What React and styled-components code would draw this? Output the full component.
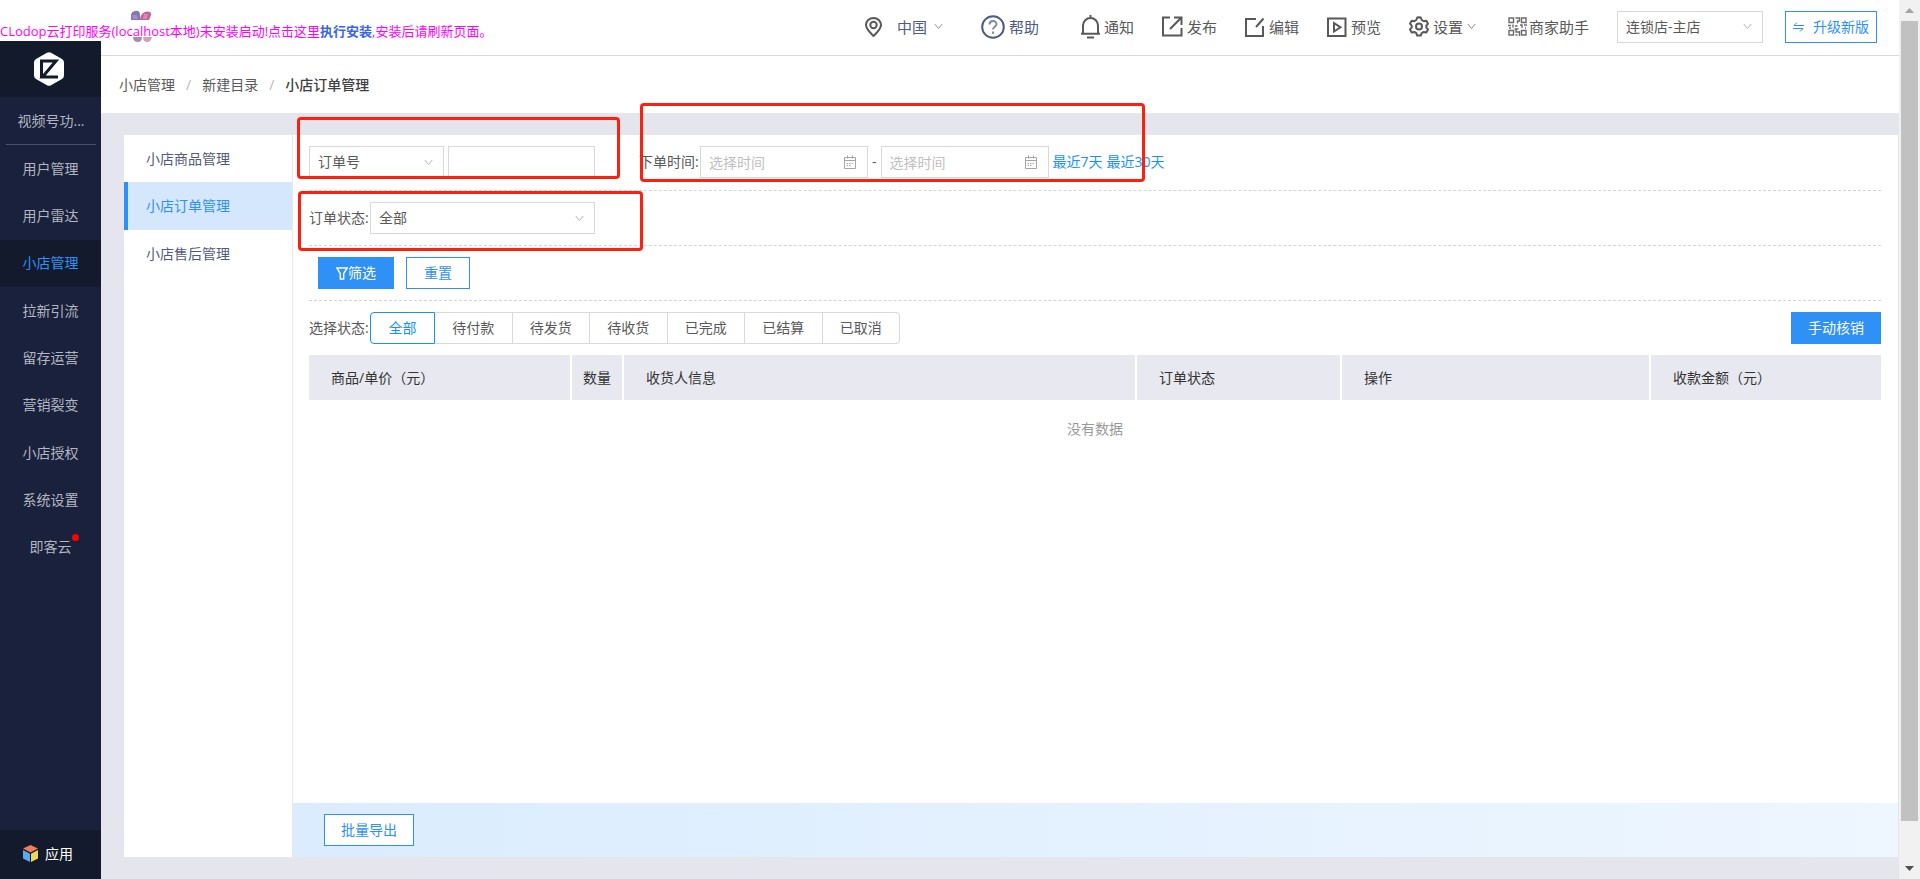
import React, { useState } from "react";
import styled, { createGlobalStyle } from "styled-components";

const GlobalStyle = createGlobalStyle`
  * {
    box-sizing: border-box;
  }
  body {
    margin: 0;
    overflow: hidden;
    background: #fff;
  }
  body, button, input, select {
    font-family: "Open Sans", "Noto Sans CJK SC", sans-serif;
    font-size: 14px;
    line-height: 20px;
    color: #595959;
  }
  a {
    text-decoration: none;
  }
`;

const Page = styled.div`
  position: relative;
  display: flex;
  height: 100vh;
`;

const Notice = styled.div`
  position: absolute;
  top: 21px;
  left: 0;
  z-index: 5;
  font-size: 13px;
  color: #ff00ff;
  white-space: nowrap;

  a {
    color: #3c66e0;
    font-weight: 700;
  }
`;

const Sidebar = styled.aside`
  display: flex;
  flex-direction: column;
  width: 101px;
  flex-shrink: 0;
  margin-top: 41px;
  background: #1a213c;
`;

const Brand = styled.div`
  display: flex;
  align-items: center;
  justify-content: center;
  height: 56px;
  padding-right: 3px;
  background: #131a2b;
`;

const ShopName = styled.div`
  margin: 0 5px 0 6px;
  height: 48px;
  line-height: 48px;
  text-align: center;
  color: #b3b6c0;
  border-bottom: 1px solid #4b5069;
`;

const MainNav = styled.nav`
  display: grid;
  grid-auto-rows: 1fr;
  height: 426px;
`;

const MainNavLink = styled.a`
  display: flex;
  align-items: center;
  justify-content: center;
  color: ${(props) => (props.$active ? "#2f91f5" : "#b3b6c0")};
  background: ${(props) => (props.$active ? "#131a2b" : "transparent")};
`;

const DotLabel = styled.span`
  position: relative;

  &::after {
    content: "";
    position: absolute;
    top: -3px;
    right: -7px;
    width: 7px;
    height: 7px;
    border-radius: 50%;
    background: #ff0000;
  }
`;

const Apps = styled.a`
  display: flex;
  align-items: center;
  gap: 6px;
  height: 49px;
  margin-top: auto;
  padding: 0 0 2px 22px;
  background: #131a2b;
  color: #fff;
`;

const Main = styled.div`
  display: flex;
  flex-direction: column;
  flex: 1;
  min-width: 0;
  background: #e5e5ee;
`;

const Header = styled.header`
  display: flex;
  align-items: center;
  height: 56px;
  padding: 0 22px 2px 29px;
  background: #fff;
  border-bottom: 1px solid #d9d9d9;
`;

const Tools = styled.div`
  display: flex;
  align-items: center;
  gap: 28px;
  margin-left: auto;
`;

const Tool = styled.a`
  display: flex;
  align-items: center;
  gap: ${(props) => props.$gap || 4}px;
  margin-right: ${(props) => props.$after || 0}px;
  font-size: 15px;
  white-space: nowrap;
  color: ${(props) => (props.$blue ? "#515a80" : "#595959")};
`;

const SelectWrap = styled.label`
  display: grid;
  align-items: center;
  width: ${(props) => props.$width}px;

  select,
  svg {
    grid-area: 1 / 1;
  }
  svg {
    justify-self: end;
    margin-right: 11px;
    pointer-events: none;
  }
`;

const SelectBox = styled.select`
  appearance: none;
  width: 100%;
  height: 32px;
  padding: 0 24px 0 8px;
  border: 1px solid #d9d9d9;
  border-radius: 0;
  background: #fff;
  outline: none;
`;

const Button = styled.button`
  display: flex;
  align-items: center;
  justify-content: center;
  gap: ${(props) => props.$gap || 0}px;
  height: 32px;
  padding: 0 ${(props) => props.$pad || 16}px;
  border: 1px solid #2f91f5;
  background: ${(props) => (props.$primary ? "#2f91f5" : "#fff")};
  color: ${(props) => (props.$primary ? "#fff" : "#2f91f5")};
  white-space: nowrap;
`;

const UpgradeSlot = styled.div`
  margin-left: -6px;
`;

const Breadcrumb = styled.nav`
  display: flex;
  align-items: center;
  gap: 11px;
  height: 57px;
  padding-left: 18px;
  background: #fff;

  a {
    color: #595959;
  }
  span {
    color: #b8b8b8;
  }
  b {
    font-weight: 500;
    color: #404040;
  }
`;

const Panel = styled.div`
  display: flex;
  flex: 1;
  margin: 22px 1px 22px 23px;
  background: #fff;
`;

const SubNav = styled.nav`
  width: 169px;
  border-right: 1px solid #e8e8e8;
`;

const SubNavLink = styled.a`
  display: block;
  height: ${(props) => (props.$active ? 48 : 47)}px;
  padding-left: 18px;
  line-height: 47px;
  border-left: 4px solid ${(props) => (props.$active ? "#2f91f5" : "transparent")};
  background: ${(props) => (props.$active ? "#d5e7fc" : "#fff")};
  color: ${(props) => (props.$active ? "#2f91f5" : "#555a78")};
`;

const Content = styled.main`
  display: flex;
  flex-direction: column;
  flex: 1;
  min-width: 0;
`;

const Orders = styled.section`
  flex: 1;
  padding: 0 17px 0 16px;
`;

const FilterRow = styled.div`
  display: flex;
  align-items: center;
  height: 55px;
  gap: ${(props) => props.$gap || 0}px;
  padding-left: ${(props) => props.$indent || 0}px;
  border-bottom: 1px dashed #d4d4d4;

  &:first-child {
    height: 56px;
    padding-bottom: 1px;
  }
`;

const StatusRow = styled.div`
  display: flex;
  align-items: center;
  gap: 4px;
  height: 54px;

  > button {
    margin-left: auto;
  }
`;

const Field = styled.div`
  position: relative;
  display: flex;
  align-items: center;
  gap: 4px;
  white-space: nowrap;
`;

const Label = styled.label`
  width: 57px;
  white-space: nowrap;
`;

const TextBox = styled.input`
  width: ${(props) => props.$width}px;
  height: 32px;
  padding: 0 8px;
  border: 1px solid #d9d9d9;
  outline: none;

  &::placeholder {
    color: #bfbfbf;
    opacity: 1;
  }
`;

const DateWrap = styled.span`
  display: grid;
  align-items: center;

  input,
  svg {
    grid-area: 1 / 1;
  }
  svg {
    justify-self: end;
    margin-right: 11px;
  }
`;

const QuickLink = styled.a`
  color: #1890ff;
`;

// red frame drawn over a field
const Mark = styled.span`
  position: absolute;
  top: ${(props) => props.$top}px;
  right: ${(props) => props.$right}px;
  bottom: ${(props) => props.$bottom}px;
  left: ${(props) => props.$left}px;
  border: 3px solid #ff1f0f;
  border-radius: 4px;
  pointer-events: none;
`;

const StatusGroup = styled.div`
  display: flex;
  width: 530px;
`;

const StatusButton = styled.button`
  flex: ${(props) => (props.$first ? "0 0 65px" : "1")};
  height: 32px;
  padding: 0;
  background: #fff;
  border: 1px solid ${(props) => (props.$active ? "#1890ff" : "#d9d9d9")};
  border-left-width: ${(props) => (props.$active || props.$first ? 1 : 0)}px;
  color: ${(props) => (props.$active ? "#1890ff" : "#595959")};

  &:first-child {
    border-radius: 4px 0 0 4px;
  }
  &:last-child {
    border-radius: 0 4px 4px 0;
  }
`;

const Table = styled.table`
  width: 100%;
  table-layout: fixed;
  border-collapse: separate;
  border-spacing: 0;

  th {
    height: 45px;
    padding: 0 0 0 22px;
    font-weight: 400;
    text-align: left;
    color: #333;
    background: #e8e8f0;
    border-right: 2px solid #fff;
  }
  th:nth-child(2) {
    padding: 0;
    text-align: center;
  }
  th:last-child {
    border-right: 0;
  }
  td {
    height: 58px;
    padding: 0;
    text-align: center;
    color: #999;
  }
`;

const BatchBar = styled.footer`
  display: flex;
  align-items: center;
  height: 54px;
  padding-left: 31px;
  background: linear-gradient(90deg, #daecfe, #eef6ff);
`;

const ScrollTrack = styled.div`
  display: flex;
  flex-direction: column;
  align-items: center;
  width: 21px;
  flex-shrink: 0;
  background: #f1f1f1;
`;

const ScrollArrow = styled.div`
  display: flex;
  align-items: center;
  justify-content: center;
  height: 21px;
`;

const ScrollThumb = styled.div`
  width: 17px;
  height: calc(100% - 79px);
  margin-bottom: auto;
  background: #c1c1c1;
`;

const Svg = ({ w, h = w, children, color = "#595959", sw = 2 }) => (
  <svg
    width={w}
    height={h}
    viewBox={`0 0 ${w} ${h}`}
    fill="none"
    stroke={color}
    strokeWidth={sw}
    aria-hidden="true"
  >
    {children}
  </svg>
);

const Chevron = ({ color = "#b4b4b4" }) => (
  <Svg w={9} h={7} color={color} sw={1}>
    <path d="M0.8 1l3.7 4.5L8.2 1" />
  </Svg>
);

const PinIcon = () => (
  <Svg w={17} h={20}>
    <path d="M8.500 19C5 15.500 1 12 1 8a7.500 7 0 0 1 15 0c0 4-4 7.500-7.500 11z" />
    <circle cx="8.500" cy="8" r="3.200" />
  </Svg>
);

const HelpIcon = () => (
  <Svg w={24} color="#515a80">
    <circle cx="12" cy="12" r="10.800" />
    <path d="M8.500 9.500c0-4.500 7-4.500 7-.5 0 2.600-3.500 2.800-3.500 5.500" stroke="#8389a5" />
    <path d="M12 16.500v2.300" stroke="#8389a5" />
  </Svg>
);

const BellIcon = () => (
  <Svg w={19} h={24}>
    <path d="M9.500 0v3M2 18.500V10.500a7.500 7.500 0 0 1 15 0v8M0 18.800h19M6 22.500h7" />
  </Svg>
);

const PublishIcon = () => (
  <Svg w={21}>
    <path d="M8 1.500H1v18h18.500V12M12 1.500h7.500V9M19 2L8 13" />
  </Svg>
);

const EditIcon = () => (
  <Svg w={20}>
    <path d="M11 2H1v17h17V9M18.500 1.500L11 10" />
  </Svg>
);

const PreviewIcon = () => (
  <Svg w={20}>
    <path d="M1 1.500h17.500v17.500H1zM7 6v8.500l6.500-4.200z" />
  </Svg>
);

const GearIcon = () => (
  <Svg w={20} h={21}>
    <path
      strokeLinejoin="round"
      d="M10 1.200l1.800.3.900 2.500 2 1.200 2.600-.5 1.700 3-1.700 2v1.700l1.700 2-1.700 3-2.600-.5-2 1.200-.9 2.500H8.200l-.9-2.500-2-1.200-2.600.5-1.700-3 1.700-2V9.700L1 7.700l1.700-3 2.600.5 2-1.200.9-2.500z"
    />
    <circle cx="10" cy="10.500" r="3" />
  </Svg>
);

const QrIcon = () => (
  <Svg w={19} sw={1.4} color="#6b6b6b">
    <path d="M1 1h4.500v4.500H1zM13.500 1H18v4.500h-4.500zM1 13.500h4.500V18H1zM13.500 13.500H18V18h-4.500z" />
    <path d="M7.500 1h4v3h-2v2.500M0 8.500h3M5 7.500v3M7 9h2.500M12 8h2v3M16 8h3M6.500 12h4M8 12v3h3M11.500 14v5M7.500 18h2M1 11h2M17 11h1" />
  </Svg>
);

const SwapIcon = () => (
  <Svg w={11} h={12} color="#2f91f5" sw={1}>
    <path d="M11 4.500H1L4 1.500M0 7.500h10L7 10.500" />
  </Svg>
);

const FilterIcon = () => (
  <Svg w={12} h={13} color="#fff" sw={1.4}>
    <path d="M.8 1h10.400L7.700 6.500V12H4.300V6.500z" />
  </Svg>
);

const CalendarIcon = () => (
  <Svg w={14} color="#a6a6a6" sw={1}>
    <path d="M1.500 2.500h11v11h-11zM1.500 5.500h11M4.500 0.500v3M9.500 0.500v3" />
    <path d="M3.500 8.500h7M3.500 10.500h5" strokeDasharray="1.500 1" />
  </Svg>
);

const HexLogo = () => (
  <Svg w={30} h={34} color="none">
    <path
      fill="#fff"
      d="M13 .8q2-1.200 4 0l11 6.200q2 1.200 2 3.400v13.200q0 2.200-2 3.400l-11 6.200q-2 1.200-4 0L2 27q-2-1.200-2-3.400V10.400Q0 8.200 2 7z"
    />
    <path stroke="#131a2b" strokeWidth="3" d="M7.500 26.500V9H22L8.500 25H24" />
  </Svg>
);

const FlowerLogo = () => (
  <Svg w={24} h={34} color="none">
    <path d="M1 8Q0 2 5 1q5-1 5 4l0 5H1z" fill="#8078b5" />
    <path d="M10 9Q11 2 17 1.500q5 0 4 4L19 10h-9z" fill="#c0659c" />
    <path d="M2 5l5 0 1 4H3z" fill="#a88cc0" />
    <path d="M14 4l4 0-1 5-4 0z" fill="#d88aa8" />
    <path d="M3 27h9q0 5-4 5-5 0-5-5z" fill="#a58bb8" />
    <path d="M13 27h9q-1 5-5 5-4 0-4-5z" fill="#d5a0b8" />
  </Svg>
);

const CubeIcon = () => (
  <Svg w={17} color="none">
    <path d="M8.500 0l7.500 3.600-7.500 4L1 3.600z" fill="#f37b5d" />
    <path d="M1 5l7 3.700V17l-7-3.600z" fill="#5ba9f5" />
    <path d="M16 5L9 8.700V17l7-3.600z" fill="#ecd957" />
  </Svg>
);

const mainLinks = [
  "用户管理",
  "用户雷达",
  "小店管理",
  "拉新引流",
  "留存运营",
  "营销裂变",
  "小店授权",
  "系统设置",
  "即客云",
];

const subLinks = ["小店商品管理", "小店订单管理", "小店售后管理"];

const statuses = ["全部", "待付款", "待发货", "待收货", "已完成", "已结算", "已取消"];

const columns = [
  { title: "商品/单价（元）", width: "16.73%" },
  { title: "数量", width: "3.31%" },
  { title: "收货人信息", width: "32.63%" },
  { title: "订单状态", width: "13.04%" },
  { title: "操作", width: "19.66%" },
  { title: "收款金额（元）", width: "14.63%" },
];

const Select = ({ width, label, options, id }) => (
  <SelectWrap $width={width}>
    <SelectBox id={id} aria-label={label}>
      {options.map((option) => (
        <option key={option}>{option}</option>
      ))}
    </SelectBox>
    <Chevron />
  </SelectWrap>
);

const DateBox = ({ id, label }) => (
  <DateWrap>
    <TextBox id={id} aria-label={label} $width={168} placeholder="选择时间" />
    <CalendarIcon />
  </DateWrap>
);

export default function App() {
  const [status, setStatus] = useState("全部");

  return (
    <Page>
      <GlobalStyle />
      <Notice>
        CLodop云打印服务(localhost本地)未安装启动!点击这里<a href="#install">执行安装</a>
        ,安装后请刷新页面。
      </Notice>
      <Sidebar>
        <Brand>
          <HexLogo />
        </Brand>
        <ShopName>视频号功...</ShopName>
        <MainNav>
          {mainLinks.map((name) => (
            <MainNavLink key={name} href="#" $active={name === "小店管理"}>
              {name === "即客云" ? <DotLabel>{name}</DotLabel> : name}
            </MainNavLink>
          ))}
        </MainNav>
        <Apps href="#apps">
          <CubeIcon />
          应用
        </Apps>
      </Sidebar>
      <Main>
        <Header>
          <FlowerLogo />
          <Tools>
            <Tool href="#" $blue $gap={7} $after={10}>
              <PinIcon />
              <span>&nbsp; 中国</span>
              <Chevron color="#8f95b0" />
            </Tool>
            <Tool href="#" $blue $after={14}>
              <HelpIcon />
              帮助
            </Tool>
            <Tool href="#">
              <BellIcon />
              通知
            </Tool>
            <Tool href="#">
              <PublishIcon />
              发布
            </Tool>
            <Tool href="#">
              <EditIcon />
              编辑
            </Tool>
            <Tool href="#">
              <PreviewIcon />
              预览
            </Tool>
            <Tool href="#" $after={4}>
              <GearIcon />
              设置
              <Chevron color="#8c8c8c" />
            </Tool>
            <Tool href="#" $gap={2}>
              <QrIcon />
              商家助手
            </Tool>
            <Select width={146} label="店铺" options={["连锁店-主店"]} />
            <UpgradeSlot>
              <Button $pad={7} $gap={9}>
                <SwapIcon />
                升级新版
              </Button>
            </UpgradeSlot>
          </Tools>
        </Header>
        <Breadcrumb>
          <a href="#">小店管理</a>
          <span>/</span>
          <a href="#">新建目录</a>
          <span>/</span>
          <b>小店订单管理</b>
        </Breadcrumb>
        <Panel>
          <SubNav>
            {subLinks.map((name) => (
              <SubNavLink key={name} href="#" $active={name === "小店订单管理"}>
                {name}
              </SubNavLink>
            ))}
          </SubNav>
          <Content>
            <Orders>
              <FilterRow $gap={44}>
                <Field>
                  <Select width={135} label="搜索类型" options={["订单号"]} />
                  <TextBox $width={147} aria-label="订单号" />
                  <Mark $top={-29} $right={-25} $bottom={-1} $left={-12} />
                </Field>
                <Field>
                  <Label htmlFor="start">下单时间:</Label>
                  <DateBox id="start" label="下单时间" />
                  -
                  <DateBox id="end" label="结束时间" />
                  <QuickLink href="#">最近7天</QuickLink>
                  <QuickLink href="#">最近30天</QuickLink>
                  <Mark $top={-43} $right={20} $bottom={-4} $left={1} />
                </Field>
              </FilterRow>
              <FilterRow>
                <Field>
                  <Label htmlFor="state">订单状态:</Label>
                  <Select width={225} id="state" options={["全部"]} />
                  <Mark $top={-11} $right={-48} $bottom={-17} $left={-11} />
                </Field>
              </FilterRow>
              <FilterRow $gap={12} $indent={9}>
                <Button $primary $pad={17}>
                  <FilterIcon />
                  筛选
                </Button>
                <Button $pad={17}>重置</Button>
              </FilterRow>
              <StatusRow>
                <Label as="span">选择状态:</Label>
                <StatusGroup>
                  {statuses.map((name, index) => (
                    <StatusButton
                      key={name}
                      $first={index === 0}
                      $active={name === status}
                      onClick={() => setStatus(name)}
                    >
                      {name}
                    </StatusButton>
                  ))}
                </StatusGroup>
                <Button $primary>手动核销</Button>
              </StatusRow>
              <Table>
                <colgroup>
                  {columns.map((column) => (
                    <col key={column.title} width={column.width} />
                  ))}
                </colgroup>
                <thead>
                  <tr>
                    {columns.map((column) => (
                      <th key={column.title}>{column.title}</th>
                    ))}
                  </tr>
                </thead>
                <tbody>
                  <tr>
                    <td colSpan={columns.length}>没有数据</td>
                  </tr>
                </tbody>
              </Table>
            </Orders>
            <BatchBar>
              <Button>批量导出</Button>
            </BatchBar>
          </Content>
        </Panel>
      </Main>
      <ScrollTrack>
        <ScrollArrow>
          <Svg w={9} h={5} color="none">
            <path d="M4.500 0L9 5H0z" fill="#a3a3a3" />
          </Svg>
        </ScrollArrow>
        <ScrollThumb />
        <ScrollArrow>
          <Svg w={9} h={5} color="none">
            <path d="M0 0h9L4.500 5z" fill="#505050" />
          </Svg>
        </ScrollArrow>
      </ScrollTrack>
    </Page>
  );
}
